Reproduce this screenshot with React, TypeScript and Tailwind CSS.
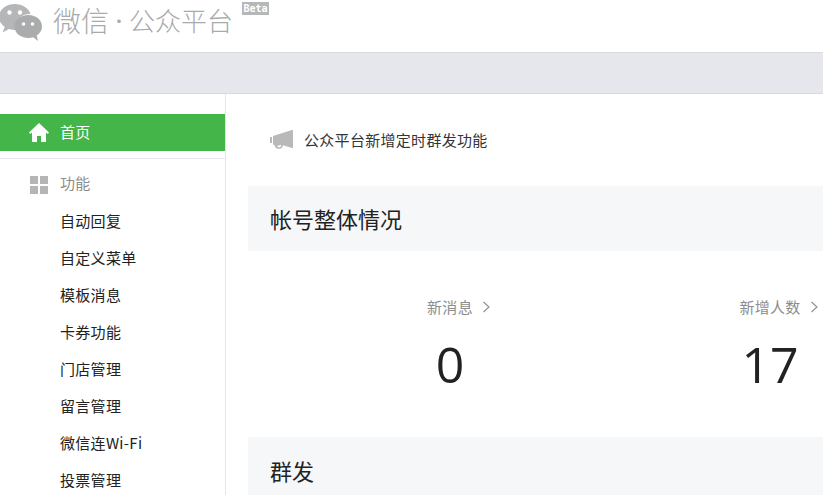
const font = { fontFamily: '"Noto Sans CJK SC", "Open Sans", sans-serif' };

const menuItems = ['自动回复', '自定义菜单', '模板消息', '卡券功能', '门店管理', '留言管理', '微信连Wi-Fi', '投票管理'];

const WechatLogo = () => (
  <svg width="44" height="40" viewBox="0 0 44 40" className="block">
    <path d="M16 2C7.500 2 0 7.500 0 15c0 4.200 2.300 7.600 5.800 10L3.500 30.500 10 27c2 .6 4 1 6 1 .6 0 1.300 0 1.800-.1-.4-1.300-.6-2.500-.6-3.900C17.200 16.500 24 11.500 31.500 12 30 6.500 23.500 2 16 2z" fill="#b4b6b7" />
    <circle cx="10.500" cy="10.500" r="2.200" fill="#fff" />
    <circle cx="21" cy="10.500" r="2.200" fill="#fff" />
    <path d="M29.500 13C21.500 13 15.500 18 15.500 24.500S21.500 36 29.500 36c1.600 0 3.200-.3 4.700-.8L39 39l-1.300-5.500C41 31.400 43 28.200 43 24.500 43 18 37.200 13 29.500 13z" fill="#a9abac" />
    <circle cx="24.500" cy="22" r="1.800" fill="#fff" />
    <circle cx="33.500" cy="22" r="1.800" fill="#fff" />
  </svg>
);

const Home = () => (
  <svg width="20" height="19" viewBox="0 0 20 19" className="block">
    <path d="M10 0 0 9.500 1.200 11 3 9.400V19h5v-6h4v6h5V9.400L18.800 11 20 9.500z" fill="#fff" />
  </svg>
);

const Grid = () => (
  <div className="grid grid-cols-2 gap-[2px] w-[18px] h-[18px]">
    <span className="bg-[#b5b5b5]" />
    <span className="bg-[#b5b5b5]" />
    <span className="bg-[#b5b5b5]" />
    <span className="bg-[#b5b5b5]" />
  </div>
);

const Horn = () => (
  <svg width="23" height="20" viewBox="0 0 23 20" className="block">
    <path d="M0 7h2v6H0zM3 6l19-6h1v18h-1L13 15.200c-.4 2.500-2.500 4-5 3.600-2-.3-3-1.600-3.200-3.400L3 14.500zM7.200 16c.3 1 1.300 1.500 2.300 1.300 1-.2 1.600-1 1.700-2.500z" fill="#b9b9b9" />
  </svg>
);

const Chevron = () => (
  <svg width="9" height="12" viewBox="0 0 9 12" className="block">
    <path d="M1.500 1 7 6l-5.500 5" fill="none" stroke="#8d8d8d" strokeWidth="1.100" />
  </svg>
);

const Stat = ({ label, value, className }: { label: string; value: string; className: string }) => (
  <div className={`flex flex-col items-center shrink-0 ${className}`}>
    <div className="flex items-center h-[20px] text-[15px] leading-[20px] tracking-[0.3px] text-[#8d8d8d]">
      <span>{label}</span>
      <span className="ml-[9px] -mr-[18px]">
        <Chevron />
      </span>
    </div>
    <div className="mt-[17px] text-[50px] leading-[60px] text-[#222]" style={{ fontFamily: '"Open Sans", sans-serif' }}>{value}</div>
  </div>
);

export default function App() {
  return (
    <div className="w-[823px] h-[495px] overflow-hidden bg-white" style={font}>
      <header className="h-[53px] border-b border-[#d9dadc] flex items-start">
        <div className="-ml-[1px] mt-[2px]">
          <WechatLogo />
        </div>
        <div className="ml-[10px] -mt-[2px] flex items-center h-[44px] font-light text-[#a8aaac]">
          <span className="text-[28px] leading-[44px]">微信</span>
          <span className="w-[20px] text-center text-[14px] font-bold leading-[44px]">·</span>
          <span className="text-[26px] leading-[44px]">公众平台</span>
        </div>
        <span className="ml-[9px] mt-[2px] h-[13px] w-[27px] text-center bg-[#b5b7b9] text-[10px] font-bold leading-[13px] text-white" style={{ fontFamily: '"DejaVu Sans Mono", monospace' }}>Beta</span>
      </header>
      <div className="h-[41px] bg-[#e6e7ec] border-b border-[#d9dadc]" />
      <div className="flex h-[401px]">
        <aside className="w-[226px] shrink-0 border-r border-[#e5e6e8] pt-[20px]">
          <div className="h-[37px] bg-[#44b549] flex items-center pl-[29px] gap-[11px] text-white text-[15px] tracking-[0.3px] leading-[35px]">
            <Home />
            <span className="-mt-[2px]">首页</span>
          </div>
          <div className="mt-[7px] border-t border-[#e7e7eb]" />
          <div className="h-[37px] mt-[7px] flex items-center pl-[30px] gap-[12px] text-[15px] tracking-[0.3px] text-[#8d8d8d]">
            <Grid />
            <span className="-mt-[2px]">功能</span>
          </div>
          <ul>
            {menuItems.map(item => (
              <li key={item} className="h-[37px] pl-[60px] text-[15px] tracking-[0.3px] leading-[35px] text-[#222]">{item}</li>
            ))}
          </ul>
        </aside>
        <main className="flex-1 pl-[22px] min-w-0">
          <div className="h-[92px] pl-[22px] flex items-center gap-[11px] text-[15px] tracking-[0.3px] text-[#353535]">
            <Horn />
            <span className="mt-[1px]">公众平台新增定时群发功能</span>
          </div>
          <div className="h-[65px] bg-[#f6f7f9] pl-[22px] text-[22px] leading-[65px] text-[#222]">帐号整体情况</div>
          <div className="h-[186px] pt-[46px] flex">
            <Stat label="新消息" value="0" className="ml-[179px] w-[46px]" />
            <Stat label="新增人数" value="17" className="ml-[266px] w-[62px]" />
          </div>
          <div className="h-[70px] bg-[#f6f7f9] pl-[22px] text-[22px] leading-[66px] text-[#222]">群发</div>
        </main>
      </div>
    </div>
  );
}
